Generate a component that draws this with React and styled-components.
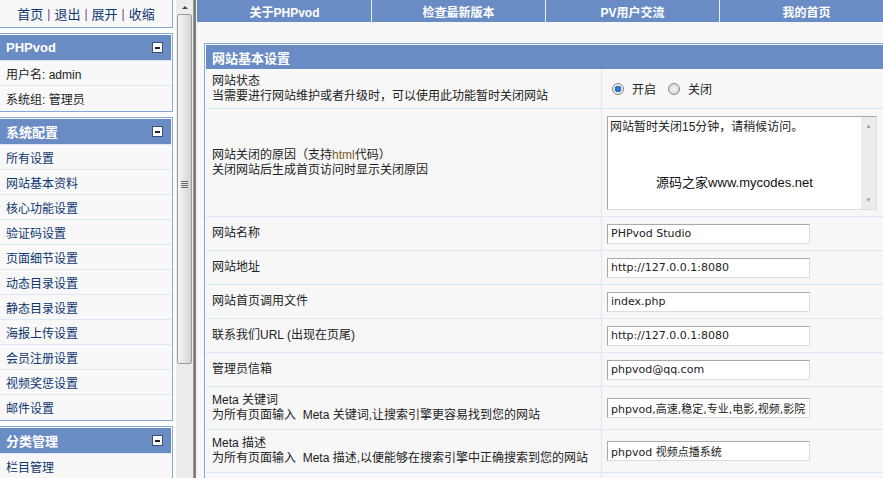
import React from "react";
import styled, { createGlobalStyle } from "styled-components";

const GlobalStyle = createGlobalStyle`
  html, body {
    margin: 0;
    padding: 0;
    background: #f7f7f7;
    overflow: hidden;
  }
  body {
    font-family: "Liberation Sans", "Noto Sans CJK SC", sans-serif;
    font-size: 12px;
  }
`;

const Page = styled.div`
  display: flex;
  width: 883px;
  height: 478px;
  overflow: hidden;
  background: #f7f7f7;
`;

/* ---------- left frame ---------- */

const LeftFrame = styled.div`
  width: 193px;
  flex: none;
  display: flex;
  background: #ffffff;
`;

const LeftContent = styled.div`
  width: 173px;
  flex: none;
  display: flex;
  flex-direction: column;
  gap: 5px;
  & > * {
    flex: none;
  }
`;

const TopLinks = styled.div`
  height: 27px;
  border: 1px solid #86a7da;
  border-left: 0;
  border-top: 0;
  background: #f8f8f8;
  display: flex;
  align-items: center;
  justify-content: center;
  gap: 4px;
  color: #0d3671;
  font-size: 13px;
`;

const Sep = styled.span`
  color: #7a3b8a;
  font-size: 12px;
`;

const Panel = styled.div`
  border: 1px solid #86a7da;
  border-left: 0;
  padding: 1px 1px 1px 0;
  background: #f8f8f8;
`;

const PanelHead = styled.div`
  height: 25px;
  background: #6a8cc4;
  color: #fff;
  font-weight: bold;
  font-size: 13px;
  display: flex;
  align-items: center;
  justify-content: space-between;
  padding: 0 8px 0 6px;
`;

const Collapse = styled.span`
  width: 9px;
  height: 9px;
  background: #fff;
  border: 1px solid #3b4f70;
  display: flex;
  align-items: center;
  justify-content: center;
  &::after {
    content: "";
    width: 5px;
    height: 2px;
    background: #222;
  }
`;

const MenuRow = styled.div`
  height: 24px;
  border-top: 1px solid #dce8f5;
  display: flex;
  align-items: center;
  padding-left: 6px;
  color: ${(p) => (p.$plain ? "#222" : "#0d3671")};
  font-size: 12px;
  &:first-of-type {
    border-top: 0;
  }
`;

const Scrollbar = styled.div`
  width: 17px;
  flex: none;
  margin-left: 3px;
  display: flex;
  flex-direction: column;
  align-items: stretch;
  background: #ececec;
`;

const ArrowBtn = styled.div`
  height: 14px;
  display: flex;
  align-items: center;
  justify-content: center;
  &::after {
    content: "";
    border-left: 3px solid transparent;
    border-right: 3px solid transparent;
    border-bottom: 3px solid #444;
  }
`;

const Thumb = styled.div`
  height: 348px;
  margin: 0 1px;
  border: 1px solid #9b9b9b;
  border-radius: 2px;
  background: linear-gradient(to right, #f4f4f4, #e2e2e2 60%, #d0d0d0);
  display: flex;
  align-items: center;
  justify-content: center;
`;

const Grip = styled.div`
  width: 7px;
  height: 7px;
  background: repeating-linear-gradient(to bottom, #666 0 1px, transparent 1px 2px);
  margin-top: -9px;
`;

const Divider = styled.div`
  width: 3px;
  flex: none;
  background: linear-gradient(to right, #b8b8b8, #6f6f6f 40%, #8a8a8a);
`;

const Gap = styled.div`
  width: 1px;
  flex: none;
  background: #f0f0f0;
`;

/* ---------- right frame ---------- */

const RightFrame = styled.div`
  flex: 1;
  min-width: 0;
  overflow: hidden;
  background: #f7f7f7;
`;

const Tabs = styled.div`
  display: flex;
  width: 696px;
  height: 22px;
  background: #6a8cc4;
`;

const Tab = styled.div`
  flex: 1;
  display: flex;
  align-items: center;
  justify-content: center;
  color: #fff;
  font-weight: bold;
  font-size: 12px;
  border-left: 1px solid ${(p) => (p.$first ? "#6a8cc4" : "#e8eef8")};
`;

const Table = styled.div`
  margin: 21px 0 0 7px;
  width: 700px;
  border: 1px solid #86a7da;
  padding: 1px 0 0 1px;
  background: #f7f7f7;
`;

const TableHead = styled.div`
  height: 24px;
  background: #6a8cc4;
  color: #fff;
  font-weight: bold;
  font-size: 13px;
  display: flex;
  align-items: center;
  padding-left: 6px;
`;

const Row = styled.div`
  display: grid;
  grid-template-columns: 396px 1fr;
  min-height: ${(p) => p.$h}px;
  border-bottom: 1px solid #dce8f5;
`;

const Label = styled.div`
  display: flex;
  flex-direction: column;
  justify-content: center;
  padding-left: 6px;
  color: #222;
  line-height: 15px;
  white-space: pre;
  border-right: 1px solid #dce8f5;
`;

const Accent = styled.span`
  color: #7a5b1e;
`;

const Value = styled.div`
  display: flex;
  align-items: center;
  padding-left: 5px;
`;

const Radios = styled.div`
  display: flex;
  align-items: center;
  gap: 8px;
  padding-left: 5px;
  color: #222;
`;

const Radio = styled.span`
  width: 10px;
  height: 10px;
  border-radius: 50%;
  border: 1px solid #8a8a8a;
  background: ${(p) =>
    p.$on
      ? "radial-gradient(circle, #2a7ad0 0 2.5px, #1a4f94 3px, #e8e8e8 3.5px)"
      : "radial-gradient(circle, #f4f4f4, #cfcfcf)"};
  margin-left: ${(p) => (p.$on ? 0 : 4)}px;
`;

const TextArea = styled.div`
  width: 268px;
  height: 92px;
  background: #fff;
  border: 1px solid #a9a9a9;
  border-right-color: #dcdcdc;
  border-bottom-color: #dcdcdc;
  display: flex;
`;

const AreaText = styled.div`
  flex: 1;
  padding: 3px 2px;
  color: #222;
  line-height: 15px;
  display: flex;
  flex-direction: column;
`;

const Watermark = styled.div`
  margin-top: 40px;
  text-align: center;
  font-size: 13px;
  color: #111;
`;

const AreaScroll = styled.div`
  width: 15px;
  background: #ececec;
  display: flex;
  flex-direction: column;
  justify-content: space-between;
  align-items: center;
  padding: 6px 0;
  color: #999;
  font-size: 6px;
`;

const Input = styled.div`
  width: 195px;
  height: 18px;
  background: #fff;
  border: 1px solid #a9a9a9;
  border-right-color: #dcdcdc;
  border-bottom-color: #dcdcdc;
  padding: 0 3px;
  display: flex;
  align-items: center;
  white-space: nowrap;
  overflow: hidden;
  color: #222;
  font-family: "DejaVu Sans", "Noto Sans CJK SC", sans-serif;
  font-size: 11px;
`;

const leftMenu = [
  "所有设置",
  "网站基本资料",
  "核心功能设置",
  "验证码设置",
  "页面细节设置",
  "动态目录设置",
  "静态目录设置",
  "海报上传设置",
  "会员注册设置",
  "视频奖惩设置",
  "邮件设置",
];

const fields = [
  { label: ["网站名称"], value: "PHPvod Studio", h: 33 },
  { label: ["网站地址"], value: "http://127.0.0.1:8080", h: 33 },
  { label: ["网站首页调用文件"], value: "index.php", h: 33 },
  { label: ["联系我们URL (出现在页尾)"], value: "http://127.0.0.1:8080", h: 33 },
  { label: ["管理员信箱"], value: "phpvod@qq.com", h: 33 },
  {
    label: ["Meta 关键词", "为所有页面输入  Meta 关键词,让搜索引擎更容易找到您的网站"],
    value: "phpvod,高速,稳定,专业,电影,视频,影院",
    h: 42,
  },
  {
    label: ["Meta 描述", "为所有页面输入  Meta 描述,以便能够在搜索引擎中正确搜索到您的网站"],
    value: "phpvod 视频点播系统",
    h: 42,
  },
  { label: [""], value: "", h: 33 },
];

export default function App() {
  return (
    <Page>
      <GlobalStyle />
      <LeftFrame>
        <LeftContent>
          <TopLinks>
            首页 <Sep>|</Sep> 退出 <Sep>|</Sep> 展开 <Sep>|</Sep> 收缩
          </TopLinks>
          <Panel>
            <PanelHead>
              PHPvod <Collapse />
            </PanelHead>
            <MenuRow $plain>用户名: admin</MenuRow>
            <MenuRow $plain>系统组: 管理员</MenuRow>
          </Panel>
          <Panel>
            <PanelHead>
              系统配置 <Collapse />
            </PanelHead>
            {leftMenu.map((m) => (
              <MenuRow key={m}>{m}</MenuRow>
            ))}
          </Panel>
          <Panel>
            <PanelHead>
              分类管理 <Collapse />
            </PanelHead>
            <MenuRow>栏目管理</MenuRow>
          </Panel>
        </LeftContent>
        <Scrollbar>
          <ArrowBtn />
          <Thumb>
            <Grip />
          </Thumb>
        </Scrollbar>
      </LeftFrame>
      <Divider />
      <Gap />
      <RightFrame>
        <Tabs>
          <Tab $first>关于PHPvod</Tab>
          <Tab>检查最新版本</Tab>
          <Tab>PV用户交流</Tab>
          <Tab>我的首页</Tab>
        </Tabs>
        <Table>
          <TableHead>网站基本设置</TableHead>
          <Row $h={39}>
            <Label>
              <span>网站状态</span>
              <span>当需要进行网站维护或者升级时，可以使用此功能暂时关闭网站</span>
            </Label>
            <Value>
              <Radios>
                <Radio $on /> 开启 <Radio /> 关闭
              </Radios>
            </Value>
          </Row>
          <Row $h={107}>
            <Label>
              <span>
                网站关闭的原因（支持<Accent>html</Accent>代码）
              </span>
              <span>关闭网站后生成首页访问时显示关闭原因</span>
            </Label>
            <Value>
              <TextArea>
                <AreaText>
                  <span>网站暂时关闭15分钟，请稍候访问。</span>
                  <Watermark>源码之家www.mycodes.net</Watermark>
                </AreaText>
                <AreaScroll>
                  <span>▲</span>
                  <span>▼</span>
                </AreaScroll>
              </TextArea>
            </Value>
          </Row>
          {fields.map((f, i) => (
            <Row key={i} $h={f.h}>
              <Label>
                {f.label.map((l) => (
                  <span key={l}>{l}</span>
                ))}
              </Label>
              <Value>{f.value && <Input>{f.value}</Input>}</Value>
            </Row>
          ))}
        </Table>
      </RightFrame>
    </Page>
  );
}
